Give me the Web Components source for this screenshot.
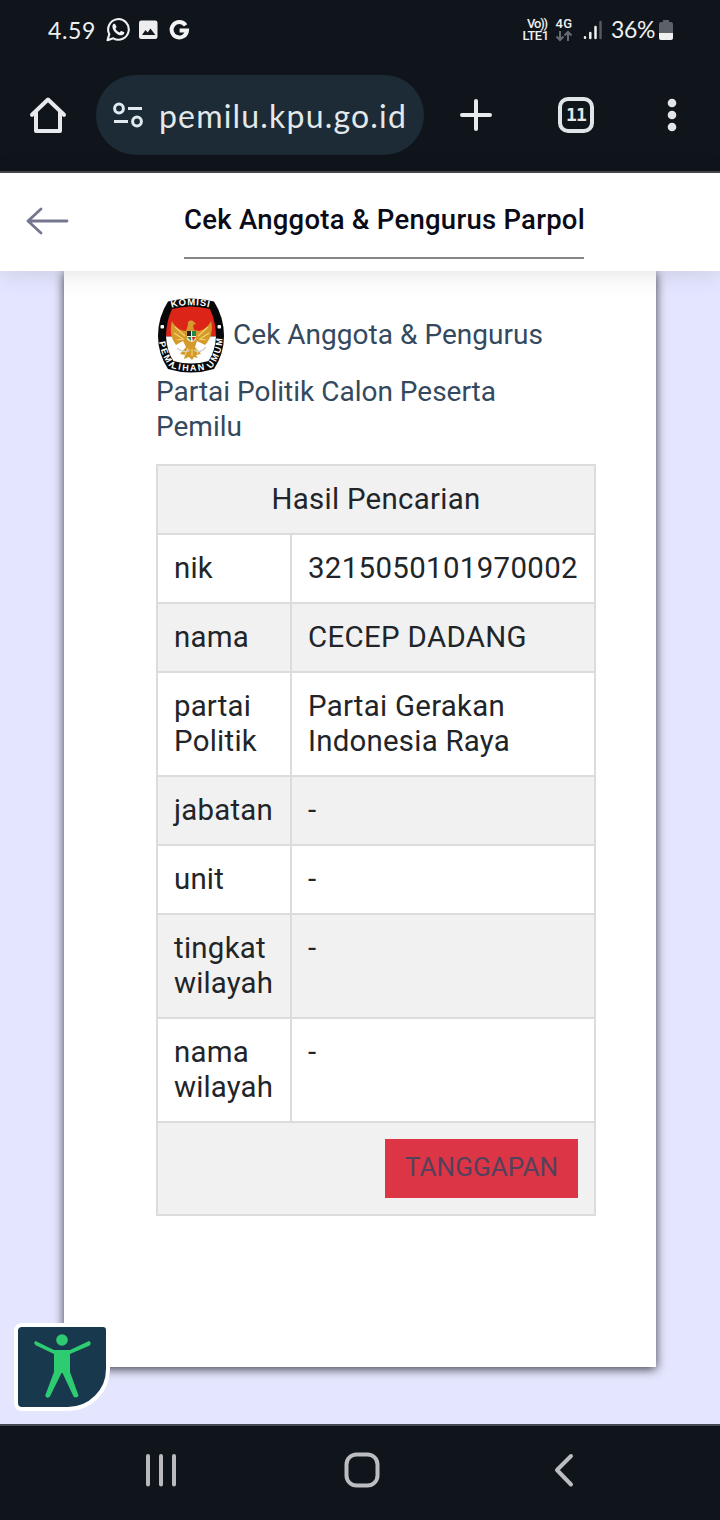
<!DOCTYPE html>
<html lang="id">
<head>
<meta charset="utf-8">
<title>Cek Anggota &amp; Pengurus Parpol</title>
<style>
body{margin:0;background:#e4e6ff;font-family:Roboto,"Liberation Sans",sans-serif}
</style>
</head>
<body>
<phone-screen></phone-screen>
<script>
const define=(name,html,setup)=>customElements.define(name,class extends HTMLElement{
  constructor(){super();this.attachShadow({mode:'open'}).innerHTML=html;}
  connectedCallback(){if(setup)setup(this);}
});

/* One line of text whose tracking is spread over a given width. */
define('fit-text','<style>:host{display:block;white-space:nowrap}span{display:inline-block}</style><span><slot></slot></span>',el=>{
  const span=el.shadowRoot.querySelector('span');
  const target=+el.getAttribute('w'),n=el.textContent.length;
  const natural=span.getBoundingClientRect().width;
  span.style.letterSpacing=((target-natural)/n)+'px';
});

define('status-bar',`<style>
:host{display:flex;align-items:center;height:60px;padding:0 48px;box-sizing:border-box;color:#eef0f2;font-family:Lato,sans-serif}
svg{display:block;flex:none}
.time{width:48px;font-size:23px;line-height:30px;margin-right:10px;margin-top:-1px}
.spacer{flex:1}
.col{font:500 13px/12px Roboto,sans-serif;text-align:center}
.volte{width:27px}.net{width:18px;margin-left:6px}
.pct{width:44px;margin-left:8px;font-size:23px;line-height:30px;margin-top:-2px}
</style>
<fit-text class="time" w="48">4.59</fit-text>
<svg width="86" height="26" viewBox="106 17 86 26">
<path d="M107.500 40.200l1.800-6.100a10.300 10.300 0 1 1 4 4.200z" fill="none" stroke="#f0f2f3" stroke-width="2.100" stroke-linejoin="round"/>
<path d="M112.500 25.400c.5-1.400 1.700-2 2.700-1.200l1.300 2.600c.1.800-.8 1.400-1 1.900.9 1.800 2.200 3 4 3.700.7-.5 1.200-1.600 2-1.500l2.700 1.400c.5.700-.5 2.500-2.100 2.900-4.800.9-10.500-5.300-9.600-9.800z" fill="#f0f2f3"/>
<rect x="139" y="20.500" width="18.500" height="18.500" rx="2.300" fill="#eee"/><path d="M142 35l3.500-5 2.200 2.500 2.700-4 5 6.500z" fill="#14191f"/>
<path d="M185.600 25.300a7.700 7.700 0 1 0 1.400 5.200h-7.400" fill="none" stroke="#f3f3f3" stroke-width="4"/>
</svg>
<span class="spacer"></span>
<div class="col volte"><fit-text w="20" style="padding-left:3px">Vo))</fit-text><fit-text w="26">LTE1</fit-text></div>
<div class="col net"><fit-text w="17">4G</fit-text><svg width="18" height="12" viewBox="0 0 18 12" fill="none" stroke="#666b71" stroke-width="2"><path d="M5 1v9M1.500 6.500L5 10l3.500-3.500M13 11V2M9.500 5.500L13 2l3.500 3.500"/></svg></div>
<svg style="margin-left:10px;margin-top:-1px" width="20" height="20" viewBox="0 0 20 20" stroke-width="2.500" stroke-linecap="round" stroke="#f0f0f0"><path d="M2 17.200v.5M7.300 13v5M12.500 7v11"/><path d="M17.500 2v16" stroke="#555a60"/></svg>
<fit-text class="pct" w="44">36%</fit-text>
<svg style="margin-left:4px;margin-right:-1px;margin-top:-1px" width="14" height="22" viewBox="0 0 14 22"><path d="M4 1h6v2h2q2 0 2 2v9H0V5q0-2 2-2h2z" fill="#5c6067"/><path d="M0 14h14v5q0 2-2 2H2q-2 0-2-2z" fill="#f0f0f0"/></svg>`);

define('browser-bar',`<style>
:host{display:flex;align-items:center;height:111px;padding:0 29px 2px 29px;box-sizing:border-box;color:#e3e8eb}
svg{display:block;flex:none}
.url{display:flex;align-items:center;width:328px;height:80px;border-radius:40px;background:#1c2b35;margin-left:29px;margin-right:35px;padding-left:17px;box-sizing:border-box}
.addr{font:32px/44px Lato,sans-serif;width:248px;margin-left:15px;margin-top:3px}
.tabs{width:36px;height:36px;box-sizing:border-box;border:4px solid #e0e5e9;border-radius:10px;margin-left:65px;font:bold 18px/28px "DejaVu Sans Mono",monospace;padding-left:4px}
</style>
<svg width="38" height="38" viewBox="29 96 38 38" fill="none" stroke="#e7e9ed" stroke-width="4" stroke-linecap="round" stroke-linejoin="round"><path d="M32 114.800L48 99.500l16 15.300M36 112v19h24v-19"/></svg>
<div class="url"><svg width="31" height="26" viewBox="113 102 31 26" fill="none" stroke="#e0eaf0" stroke-width="3"><circle cx="119" cy="108.500" r="4.400"/><path d="M128 108.500h14M114 121.500h14"/><circle cx="137" cy="121.500" r="4.400"/></svg>
<fit-text class="addr" w="248">pemilu.kpu.go.id</fit-text></div>
<svg width="34" height="34" viewBox="0 0 34 34" stroke="#e8eaed" stroke-width="4" stroke-linecap="round"><path d="M17 3v28M3 17h28"/></svg>
<div class="tabs"><fit-text w="20">11</fit-text></div>
<svg style="margin-left:73px" width="10" height="34" viewBox="0 0 10 34" fill="#e3e5e8"><circle cx="5" cy="5" r="4.300"/><circle cx="5" cy="17" r="4.300"/><circle cx="5" cy="29" r="4.300"/></svg>`);

define('page-header',`<style>
:host{display:flex;height:98px;box-sizing:border-box;padding:0 26px;background:#fff;position:relative;z-index:1;box-shadow:0 2px 24px rgba(0,0,0,.12);color:#0b0b18}
svg{display:block;margin-top:33px}
.title{width:400px;height:84px;border-bottom:2px solid #858585;margin-left:115px;font-weight:500;font-size:27.500px;line-height:94px}
</style>
<svg width="43" height="30" viewBox="0 0 43 30" fill="none" stroke="#75768f" stroke-width="2.800" stroke-linecap="round" stroke-linejoin="round"><path d="M15 3L2 15l13 12M2 15h39"/></svg>
<div class="title"><fit-text w="401">Cek Anggota &amp; Pengurus Parpol</fit-text></div>`);

define('kpu-logo',`<style>:host{display:block;margin:0 -1px 0 1px}svg{display:block}text{font:bold 9.500px "Liberation Sans",Arial,sans-serif;fill:#fff}</style>
<svg width="68" height="78" viewBox="0 0 68 78">
<path d="M11 4.500Q34-1.500 57 4.500 67 20 67 39 67 57 57 72 34 79 11 72 1 57 1 39 1 20 11 4.500z" fill="#080808"/>
<path d="M15 12q19-5 38 0 6 13 6 27.500H9Q9 25 15 12z" fill="#dc2418"/>
<path d="M9 39.500h50Q58 55 51.500 64 34 69 16.500 64 10 55 9 39.500z" fill="#fff"/>
<path d="M31 28c-1-4 3-6 6-3l2 2-3 1 1 5 5 1c7-2 10-6 12-10 2 7 1 17-6 24l-8-4-2 6 6 7-5 1 2 3-4-1-2 3-3-3-5 2 1-4-5-1 6-7-3-6-7 4C13 40 13 32 15 24c3 6 8 10 14 10z" fill="#d49b2c"/>
<path d="M18 30l10 9M17 36l9 6M20 43l7-1M51 30l-10 9M52 36l-9 6M49 43l-7-1M31 51l-3 7M35 52v7M39 51l2 6" stroke="#f5d36b" stroke-width="1.100" fill="none"/>
<path d="M20 51q8 6 13 2M37 53q6 4 12-3" fill="none" stroke="#d2d2cc" stroke-width="1.200"/>
<path d="M30 34h9v8q-4 6-9 0z" fill="#f3eee4"/><path d="M30 34h4v5h-4z" fill="#222"/><path d="M35 34h4v5h-4z" fill="#23864a"/><path d="M30 40h4v4z" fill="#23864a"/><path d="M35 40h4l-3 4z" fill="#c22"/>
<rect x="3.500" y="28" width="3.500" height="3.500" rx="1" fill="#fff"/><rect x="60.500" y="28" width="3.500" height="3.500" rx="1" fill="#fff"/>
<defs><path id="top" d="M14.500 10.800Q34 5.500 54.500 10.800"/><path id="bot" d="M2 44Q4 59 13 70.500 34 77.500 55 70.500 65 58 65.500 40"/></defs>
<text><textPath href="#top" textLength="38">KOMISI</textPath></text>
<text style="font-size:9px"><textPath href="#bot" textLength="102" startOffset="1">PEMILIHAN UMUM</textPath></text>
</svg>`);

define('page-title',`<style>
:host{display:block;color:#34495e;font-size:28px;line-height:35px;padding-top:26px}
.first{display:flex;height:77px}.first fit-text{margin:20px 0 0 9px}
</style>
<div class="first"><kpu-logo></kpu-logo><fit-text w="310">Cek Anggota &amp; Pengurus</fit-text></div>
<fit-text w="340">Partai Politik Calon Peserta</fit-text>
<fit-text w="86">Pemilu</fit-text>`);

define('result-row',`<style>
:host{display:grid;grid-template-columns:132px 302px;gap:2px;font-size:29.400px;line-height:35px;color:#212529}
div{background:#fff;padding:16px 0 16px 16px;box-sizing:border-box;min-height:67px}
:host([alt]) div{background:#f1f1f1}
</style><div><slot name="k"></slot></div><div><slot></slot></div>`);

define('result-table',`<style>
:host{display:flex;flex-direction:column;gap:2px;background:#dcdcdd;padding:2px;box-sizing:border-box;width:440px;margin-top:20px;color:#212529;font-size:29.400px;line-height:35px}
.head,.foot{background:#f1f1f1}
.head{padding:16px 0;display:flex;justify-content:center}
.foot{height:91px;padding:16px;box-sizing:border-box;display:flex;justify-content:flex-end;align-items:flex-start}
.btn{width:193px;height:59px;background:#dc3545;color:#54415b;font-size:26px;line-height:57px;box-sizing:border-box;padding-left:20px}
</style>
<div class="head"><fit-text w="209">Hasil Pencarian</fit-text></div>
<result-row><fit-text slot="k" w="39">nik</fit-text><fit-text w="270">3215050101970002</fit-text></result-row>
<result-row alt><fit-text slot="k" w="75">nama</fit-text><fit-text w="219">CECEP DADANG</fit-text></result-row>
<result-row><fit-text slot="k" w="77">partai</fit-text><fit-text slot="k" w="83">Politik</fit-text><fit-text w="197">Partai Gerakan</fit-text><fit-text w="202">Indonesia Raya</fit-text></result-row>
<result-row alt><fit-text slot="k" w="99">jabatan</fit-text><fit-text w="9">-</fit-text></result-row>
<result-row><fit-text slot="k" w="50">unit</fit-text><fit-text w="9">-</fit-text></result-row>
<result-row alt><fit-text slot="k" w="92">tingkat</fit-text><fit-text slot="k" w="99">wilayah</fit-text><fit-text w="9">-</fit-text></result-row>
<result-row><fit-text slot="k" w="75">nama</fit-text><fit-text slot="k" w="99">wilayah</fit-text><fit-text w="9">-</fit-text></result-row>
<div class="foot"><div class="btn"><fit-text w="153">TANGGAPAN</fit-text></div></div>`);

define('content-card',`<style>
:host{display:block;width:592px;height:1096px;margin:0 auto;padding-left:92px;box-sizing:border-box;background:#fff;box-shadow:0 2px 10px rgba(0,0,0,.75)}
</style><slot></slot>`);

define('access-button',`<style>
:host{position:absolute;left:14px;top:1052px;width:96px;height:88px;box-sizing:border-box;border:4px solid #fff;border-radius:8px 7px 42px 8px;background:#18384d}
svg{display:block}
</style><svg width="88" height="80" viewBox="0 0 88 80" fill="#2ecc71"><circle cx="44" cy="13" r="5.800"/><path d="M17.500 14q-2.500 2 .2 4.200L36 27v18l-8.800 23.500q1 3.500 4.600 1.300L43.500 46h1l11.200 23.800q3.500 2 4.800-1.300L52 45V27l19.800-8.500q2-3-.8-4.500L52 23H36z"/></svg>`);

define('nav-bar',`<style>
:host{display:flex;align-items:center;justify-content:space-between;height:96px;box-sizing:border-box;border-top:2px solid #444850;background:#10151b;padding:0 145px 6px 145px}
svg{display:block}
</style>
<svg width="33" height="36" viewBox="0 0 33 36" stroke="#b8babd" stroke-width="4" stroke-linecap="round"><path d="M3 4v28.500M16 4v28.500M29 4v28.500"/></svg>
<svg style="margin-right:9px" width="36" height="36" viewBox="0 0 36 36" fill="none" stroke="#bbbdc0" stroke-width="4"><rect x="2.500" y="2.500" width="31" height="31" rx="10"/></svg>
<svg width="21" height="36" viewBox="0 0 21 36" fill="none" stroke="#bbbdc0" stroke-width="4" stroke-linecap="round" stroke-linejoin="round"><path d="M17 4L3 18l14 14.500"/></svg>`);

define('phone-screen',`<style>
:host{display:flex;flex-direction:column;width:720px;height:1520px;overflow:hidden}
.top{height:173px;box-sizing:border-box;background:#10151b;border-bottom:2px solid #48484d}
main{height:1153px;position:relative;background:#e4e6ff}
</style>
<div class="top"><status-bar></status-bar><browser-bar></browser-bar></div>
<page-header></page-header>
<main><content-card><page-title></page-title><result-table></result-table></content-card><access-button></access-button></main>
<nav-bar></nav-bar>`);
</script>
</body>
</html>
